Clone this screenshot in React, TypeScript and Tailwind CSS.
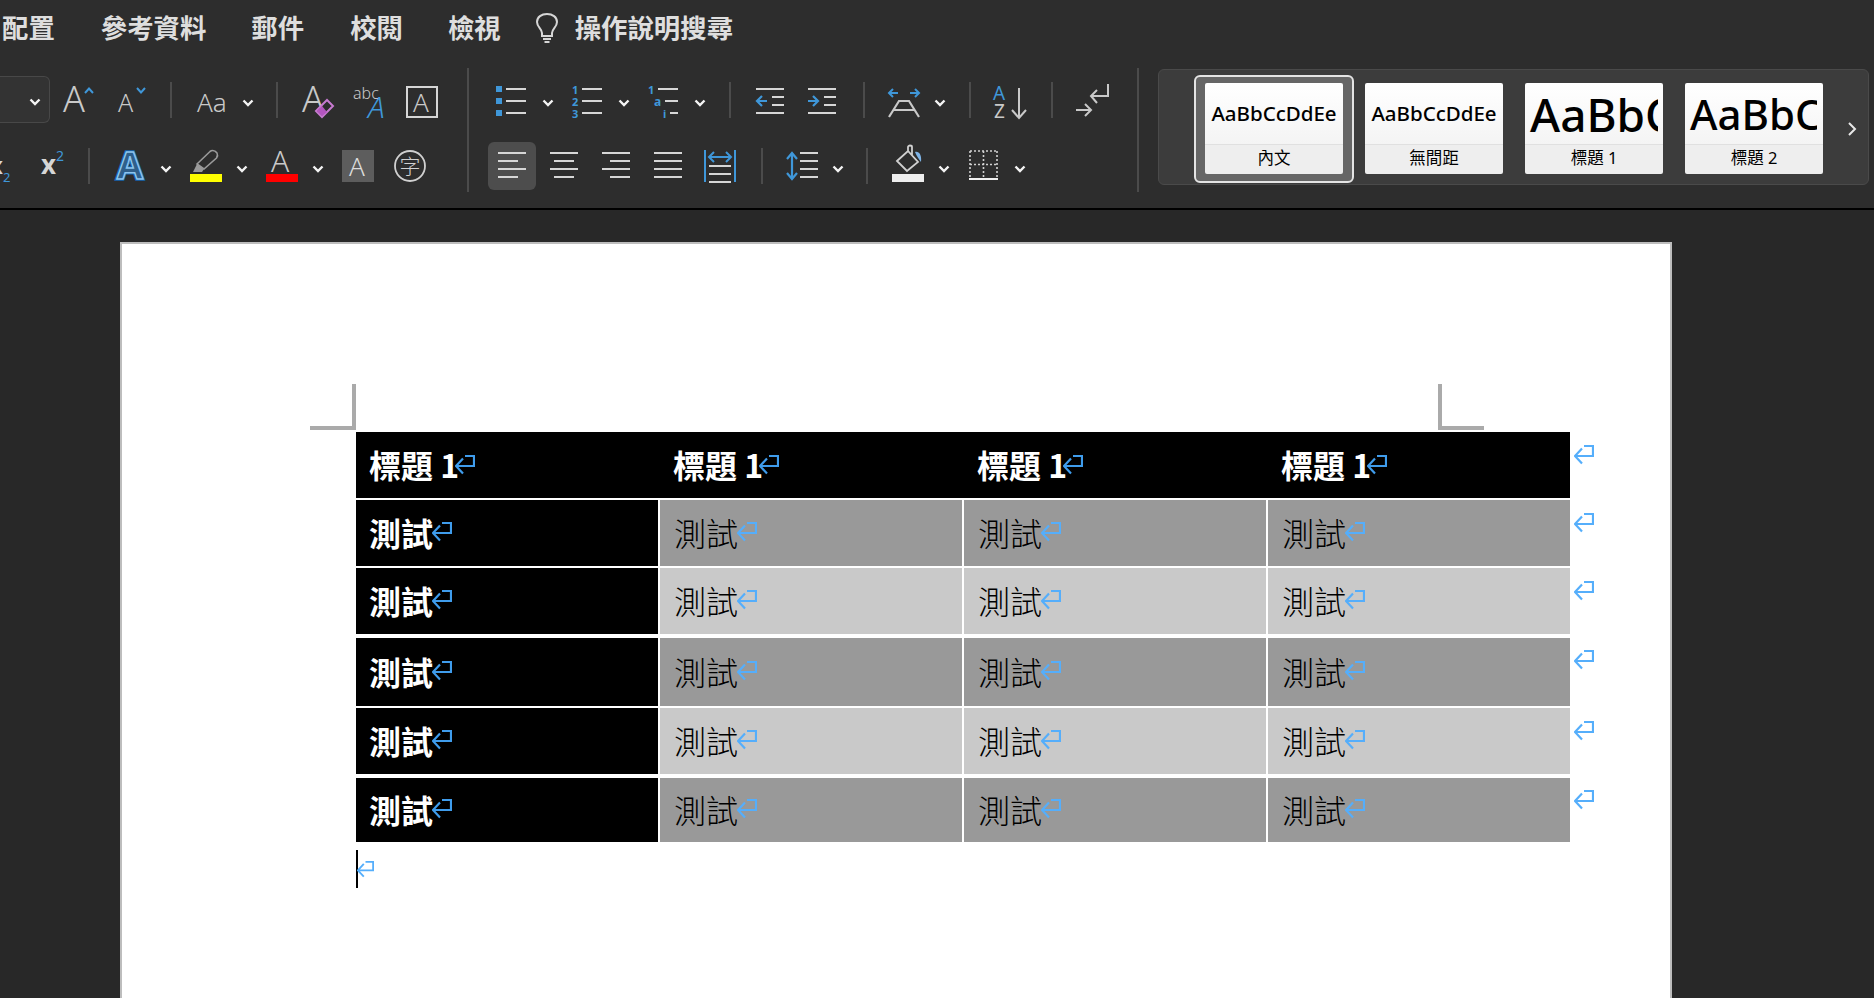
const GRAY = "#c9c9c9";
const BLUE = "#3f97d9";
const LABEL = "'Noto Sans', 'Noto Sans CJK TC', sans-serif";

// every ribbon icon is a 48px tall svg, so y values are offsets from the row top
const Icon = ({ w, className = "", children }: { w: number; className?: string; children: React.ReactNode }) => (
  <svg width={w} height={48} viewBox={`0 0 ${w} 48`} fill="none" className={`shrink-0 overflow-visible ${className}`}>
    {children}
  </svg>
);

const Chev = ({ className = "" }: { className?: string }) => (
  <Icon w={12} className={className}>
    <path d="M1.5 24.5 L6 29 L10.5 24.5" stroke="#f4f4f4" strokeWidth="2.4" />
  </Icon>
);

const Sep = ({ className = "" }: { className?: string }) => (
  <div className={`w-[2px] h-[36px] bg-[#4b4b4b] shrink-0 ${className}`} />
);

const Glyph = ({ x, y, size, fill = GRAY, weight = 300, italic, children }: { x: number; y: number; size: number; fill?: string; weight?: number; italic?: boolean; children: string }) => (
  <text x={x} y={y} fontSize={size} fill={fill} fontWeight={weight} fontStyle={italic ? "italic" : "normal"} fontFamily={LABEL}>
    {children}
  </text>
);

const Lines = ({ rows }: { rows: [number, number, number][] }) => (
  <>
    {rows.map(([x1, x2, y], i) => (
      <path key={i} d={`M${x1} ${y} H${x2}`} stroke="#d6d6d6" strokeWidth="2" />
    ))}
  </>
);

const Row = ({ children, className = "" }: { children: React.ReactNode; className?: string }) => (
  <div className={`flex items-center h-[48px] ${className}`}>{children}</div>
);

const FontGroup = () => (
  <div className="w-[467px] shrink-0 flex flex-col gap-[18px] pt-[8px] overflow-hidden">
    <Row>
      <div className="w-[50px] h-[47px] mt-[-2px] shrink-0 bg-[#333333] border border-l-0 border-[#484848] rounded-r-md flex items-center justify-end pr-[8px]">
        <Chev />
      </div>
      <Icon w={30} className="ml-[14px]">
        <Glyph x={-1} y={36} size={36}>A</Glyph>
        <path d="M21 17 L25 12.5 L29 17" stroke={BLUE} strokeWidth="2" />
      </Icon>
      <Icon w={27} className="ml-[25px]">
        <Glyph x={-1} y={36} size={25}>A</Glyph>
        <path d="M18 12 L22 16.5 L26 12" stroke={BLUE} strokeWidth="2" />
      </Icon>
      <Sep className="ml-[24px]" />
      <Icon w={32} className="ml-[25px]">
        <Glyph x={0} y={36} size={26}>Aa</Glyph>
      </Icon>
      <Chev className="ml-[13px]" />
      <Sep className="ml-[22px]" />
      <Icon w={32} className="ml-[24px]">
        <Glyph x={0} y={36} size={36}>A</Glyph>
        <path d="M14 35 L25 24 L31 30 L20 41 Z" stroke="#c77ad0" strokeWidth="2" />
        <path d="M15 35 L20 30 L25 36 L20 40 Z" fill="#b455c0" />
      </Icon>
      <Icon w={34} className="ml-[19px]">
        <Glyph x={0} y={23} size={16}>abc</Glyph>
        <Glyph x={15} y={42} size={30} fill={BLUE} weight={300} italic>A</Glyph>
      </Icon>
      <Icon w={32} className="ml-[19px]">
        <rect x="1" y="11" width="30" height="30" stroke="#d6d6d6" strokeWidth="2" />
        <Glyph x={7} y={36} size={26}>A</Glyph>
      </Icon>
    </Row>
    <Row>
      <Icon w={12}>
        <Glyph x={-11} y={32} size={24} weight={700} fill="#d6d6d6">x</Glyph>
        <Glyph x={3} y={40} size={13} fill={BLUE} weight={400}>2</Glyph>
      </Icon>
      <Icon w={22} className="ml-[29px]">
        <Glyph x={0} y={32} size={26} weight={700} fill="#d6d6d6">x</Glyph>
        <Glyph x={15} y={19} size={14} fill={BLUE} weight={400}>2</Glyph>
      </Icon>
      <Sep className="ml-[25px]" />
      <Icon w={32} className="ml-[24px]">
        <text x="16" y="37" textAnchor="middle" fontSize="38" fontWeight="700" fill="#1565ad" stroke="#1565ad" strokeWidth="3.5" fontFamily={LABEL}>A</text>
        <text x="16" y="37" textAnchor="middle" fontSize="38" fontWeight="700" fill="#2f5f8a" stroke="#8cc4ee" strokeWidth="1.5" fontFamily={LABEL}>A</text>
      </Icon>
      <Chev className="ml-[14px]" />
      <Icon w={32} className="ml-[18px]">
        <path d="M7 22 L20 9.5 C22 8 25 8.5 27 11 C28 13 28 14 26.5 16 L14 27 Z" stroke="#9a9a9a" strokeWidth="1.6" />
        <path d="M3 30 L7 22 L14 27 L12 30 Z" fill="#9a9a9a" />
        <rect x="0" y="32" width="32" height="8" fill="#ffff00" />
      </Icon>
      <Chev className="ml-[14px]" />
      <Icon w={32} className="ml-[18px]">
        <Glyph x={5} y={30} size={30}>A</Glyph>
        <rect x="0" y="32" width="32" height="8" fill="#ff0000" />
      </Icon>
      <Chev className="ml-[14px]" />
      <Icon w={32} className="ml-[18px]">
        <rect x="0" y="8" width="32" height="32" fill="#5d5d5d" />
        <Glyph x={7} y={34} size={26} fill="#dddddd">A</Glyph>
      </Icon>
      <Icon w={32} className="ml-[20px]">
        <circle cx="16" cy="24" r="15" stroke="#d0d0d0" strokeWidth="1.8" />
        <text x="16" y="32" textAnchor="middle" fontSize="21" fill="#d0d0d0" fontWeight="300" fontFamily="'Noto Sans CJK TC', sans-serif">字</text>
      </Icon>
    </Row>
  </div>
);

const ParaGroup = () => (
  <div className="w-[668px] shrink-0 flex flex-col gap-[18px] pt-[8px] pl-[19px]">
    <Row>
      <Icon w={30} className="ml-[8px]">
        <rect x="0" y="10" width="6" height="6" fill={BLUE} />
        <rect x="0" y="22" width="6" height="6" fill={BLUE} />
        <rect x="0" y="34" width="6" height="6" fill={BLUE} />
        <Lines rows={[[10, 30, 13], [10, 30, 25], [10, 30, 37]]} />
      </Icon>
      <Chev className="ml-[16px]" />
      <Icon w={30} className="ml-[18px]">
        <Glyph x={0} y={18} size={11} fill={BLUE} weight={700}>1</Glyph>
        <Glyph x={0} y={30} size={11} fill={BLUE} weight={700}>2</Glyph>
        <Glyph x={0} y={42} size={11} fill={BLUE} weight={700}>3</Glyph>
        <Lines rows={[[10, 30, 13], [10, 30, 25], [10, 30, 37]]} />
      </Icon>
      <Chev className="ml-[16px]" />
      <Icon w={30} className="ml-[18px]">
        <Glyph x={0} y={18} size={11} fill={BLUE} weight={700}>1</Glyph>
        <Glyph x={6} y={30} size={12} fill={BLUE} weight={700}>a</Glyph>
        <Glyph x={15} y={42} size={11} fill={BLUE} weight={700}>i</Glyph>
        <Lines rows={[[10, 30, 13], [17, 30, 25], [22, 30, 37]]} />
      </Icon>
      <Chev className="ml-[16px]" />
      <Sep className="ml-[23px]" />
      <Icon w={28} className="ml-[25px]">
        <Lines rows={[[0, 28, 13], [16, 28, 21], [16, 28, 29], [0, 28, 37]]} />
        <path d="M11 25 H1 M6 20 L1 25 L6 30" stroke={BLUE} strokeWidth="2.2" />
      </Icon>
      <Icon w={28} className="ml-[24px]">
        <Lines rows={[[0, 28, 13], [16, 28, 21], [16, 28, 29], [0, 28, 37]]} />
        <path d="M0 25 H10 M5 20 L10 25 L5 30" stroke={BLUE} strokeWidth="2.2" />
      </Icon>
      <Sep className="ml-[27px]" />
      <Icon w={32} className="ml-[23px]">
        <path d="M1 17 H10 M5 13 L1 17 L5 21 M22 17 H31 M27 13 L31 17 L27 21" stroke={BLUE} strokeWidth="2" />
        <path d="M1 41 L11 25 H21 L31 41 M6 34 H26" stroke="#c9c9c9" strokeWidth="2.2" />
      </Icon>
      <Chev className="ml-[14px]" />
      <Sep className="ml-[23px]" />
      <Icon w={34} className="ml-[22px]">
        <Glyph x={0} y={24} size={19} fill={BLUE} weight={400}>A</Glyph>
        <Glyph x={1} y={42} size={19} fill="#c9c9c9" weight={400}>Z</Glyph>
        <path d="M26 12 V41 M19 34 L26 42 L33 34" stroke="#c9c9c9" strokeWidth="2" />
      </Icon>
      <Sep className="ml-[24px]" />
      <Icon w={34} className="ml-[22px]">
        <path d="M33 8 V20 H16 M22 14 L16 20 L22 27" stroke="#c9c9c9" strokeWidth="2" />
        <path d="M1 34 H16 M10 28 L16 34 L10 40" stroke="#c9c9c9" strokeWidth="2" />
      </Icon>
    </Row>
    <Row>
      <div className="w-[48px] h-[48px] shrink-0 rounded-md bg-[#4d4d4d] flex items-center justify-center">
        <Icon w={28}>
          <Lines rows={[[0, 28, 11], [0, 20, 19], [0, 28, 27], [0, 20, 35]]} />
        </Icon>
      </div>
      <Icon w={28} className="ml-[14px]">
        <Lines rows={[[0, 28, 11], [4, 24, 19], [0, 28, 27], [4, 24, 35]]} />
      </Icon>
      <Icon w={28} className="ml-[24px]">
        <Lines rows={[[0, 28, 11], [8, 28, 19], [0, 28, 27], [8, 28, 35]]} />
      </Icon>
      <Icon w={28} className="ml-[24px]">
        <Lines rows={[[0, 28, 11], [0, 28, 19], [0, 28, 27], [0, 28, 35]]} />
      </Icon>
      <Icon w={32} className="ml-[22px]">
        <path d="M1 8 V40 M31 8 V40" stroke={BLUE} strokeWidth="2" />
        <path d="M5 15 H27 M10 10 L5 15 L10 20 M22 10 L27 15 L22 20" stroke={BLUE} strokeWidth="2" />
        <Lines rows={[[5, 27, 24], [5, 27, 32], [5, 27, 40]]} />
      </Icon>
      <Sep className="ml-[25px]" />
      <Icon w={32} className="ml-[23px]">
        <path d="M6 12 V36 M1 17 L6 11 L11 17 M1 31 L6 37 L11 31" stroke={BLUE} strokeWidth="2.2" />
        <Lines rows={[[14, 32, 11], [14, 32, 19], [14, 32, 27], [14, 32, 35]]} />
      </Icon>
      <Chev className="ml-[14px]" />
      <Sep className="ml-[22px]" />
      <Icon w={32} className="ml-[24px]">
        <path d="M5 19 L16 9 L26 20 L15 29 Z M16 9 V5 C16 3 20 3 20 5 V13" stroke="#d0d0d0" strokeWidth="1.8" />
        <path d="M23 10 C27 9 30 13 29 20 C27 17 25 15 23 10 Z" fill="#7fb4e6" />
        <rect x="0" y="32" width="32" height="8" fill="#eeeeee" />
      </Icon>
      <Chev className="ml-[14px]" />
      <Icon w={29} className="ml-[19px]">
        <path d="M1 9 V36 M14.5 9 V36 M28 9 V36 M1 9 H28 M1 22.5 H28" stroke="#d0d0d0" strokeWidth="1.6" strokeDasharray="2 2" />
        <rect x="0" y="36" width="29" height="2" fill="#f0f0f0" />
      </Icon>
      <Chev className="ml-[16px]" />
    </Row>
  </div>
);

const StyleCard = ({ label, className = "", children }: { label: string; className?: string; children: React.ReactNode }) => (
  <div className={`w-[138px] h-[91px] shrink-0 rounded-[2px] overflow-hidden flex flex-col text-black ${className}`}>
    <div className="h-[61px] bg-gradient-to-b from-white to-[#f4f4f4] flex items-center overflow-hidden">{children}</div>
    <div className="h-[30px] pb-[2px] bg-[#eeeeee] border-t border-[#e0e0e0] flex items-center justify-center text-[16.5px] leading-none font-['Noto_Sans','Noto_Sans_CJK_TC',sans-serif]">
      {label}
    </div>
  </div>
);

const Gallery = () => (
  <div className="w-[711px] h-[116px] mt-[1px] shrink-0 bg-[#3c3c3c] border border-[#4a4a4a] rounded-md flex items-center pl-[35px] pt-[3px] relative">
    <div className="w-[160px] h-[108px] shrink-0 border-2 border-[#e4e4e4] rounded-[6px] bg-[#666666] flex items-center justify-center">
      <StyleCard label="內文">
        <span className="w-full text-center text-[20.5px] font-medium font-['Noto_Sans',sans-serif]">AaBbCcDdEe</span>
      </StyleCard>
    </div>
    <StyleCard label="無間距" className="ml-[11px]">
      <span className="w-full text-center text-[20.5px] font-medium font-['Noto_Sans',sans-serif]">AaBbCcDdEe</span>
    </StyleCard>
    <StyleCard label="標題 1" className="ml-[22px]">
      <div className="w-[133px] pl-[5px] overflow-hidden whitespace-nowrap text-[46px] font-medium leading-none font-['Noto_Sans',sans-serif]">AaBbCcDdEe</div>
    </StyleCard>
    <StyleCard label="標題 2" className="ml-[22px]">
      <div className="w-[132px] pl-[5px] overflow-hidden whitespace-nowrap text-[42px] font-medium leading-none font-['Noto_Sans',sans-serif]">AaBbCcDdEe</div>
    </StyleCard>
    <svg width="12" height="20" viewBox="0 0 12 20" fill="none" className="ml-[23px] shrink-0">
      <path d="M3 4 L9 10 L3 16" stroke="#e8e8e8" strokeWidth="2" />
    </svg>
  </div>
);

const Ribbon = () => (
  <header className="h-[208px] bg-[#2d2d2d] flex flex-col">
    <nav className="h-[58px] pb-[3px] shrink-0 flex items-center pl-[2px] text-[#dedede] text-[26.4px] font-bold leading-none whitespace-nowrap font-['Noto_Sans_CJK_TC',sans-serif]">
      <span>配置</span>
      <span className="ml-[46px]">參考資料</span>
      <span className="ml-[45px]">郵件</span>
      <span className="ml-[46px]">校閱</span>
      <span className="ml-[45px]">檢視</span>
      <svg width="26" height="32" viewBox="0 0 26 32" fill="none" className="ml-[33px] shrink-0">
        <path d="M8 21 C8 17 3 15 3 10 C3 5 7.5 2 13 2 C18.5 2 23 5 23 10 C23 15 18 17 18 21 V24 H8 Z" stroke="#d6d6d6" strokeWidth="2" />
        <path d="M9 27 H17 M10.5 30 H15.5" stroke="#d6d6d6" strokeWidth="2" />
      </svg>
      <span className="ml-[15px]">操作說明搜尋</span>
    </nav>
    <div className="flex items-start pt-[10px]">
      <FontGroup />
      <div className="w-[2px] h-[124px] bg-[#4b4b4b] shrink-0" />
      <ParaGroup />
      <div className="w-[2px] h-[124px] bg-[#4b4b4b] shrink-0" />
      <div className="ml-[19px]">
        <Gallery />
      </div>
    </div>
  </header>
);

const ReturnMark = ({ color = "#3f9cec", className = "" }: { color?: string; className?: string }) => (
  <svg width="20" height="20" viewBox="0 0 20 20" fill="none" className={`shrink-0 ${className}`}>
    <path d="M10 1 H19 V11 H1 M8 3.5 L1 11 L8 18.5" stroke={color} strokeWidth="2.2" />
  </svg>
);

const HeadCell = () => (
  <div className="pl-[13px] flex items-center text-white text-[32px] font-bold leading-none">
    <span className="-mt-[3px]">標題 1</span>
    <ReturnMark className="-ml-[4px] -mt-[1px]" />
  </div>
);

const FirstCell = () => (
  <div className="bg-black pl-[13px] flex items-center text-white text-[32px] font-bold leading-none">
    <span className="-mt-[3px]">測試</span>
    <ReturnMark className="-ml-[1px] -mt-[2px]" />
  </div>
);

const BodyCell = ({ bg }: { bg: string }) => (
  <div className={`${bg} pl-[14px] flex items-center text-black text-[32px] font-light leading-none`}>
    <span className="-mt-[3px]">測試</span>
    <ReturnMark color="#55aefb" className="-ml-[1px] -mt-[2px]" />
  </div>
);

const rows = [
  { h: "h-[66px] mb-[2px]", bg: "bg-[#999999]" },
  { h: "h-[66px] mb-[4px]", bg: "bg-[#c9c9c9]" },
  { h: "h-[68px] mb-[2px]", bg: "bg-[#999999]" },
  { h: "h-[66px] mb-[4px]", bg: "bg-[#c9c9c9]" },
  { h: "h-[64px]", bg: "bg-[#999999]" },
];

const Page = () => (
  <main className="w-[1552px] ml-[120px] mt-[32px] h-[756px] bg-white border-2 border-b-0 border-[#bdbdbd] relative pl-[234px] pt-[188px] font-['Noto_Sans_CJK_TC',sans-serif]">
    {/* margin crop marks */}
    <div className="absolute left-[188px] top-[140px] w-[46px] h-[46px] border-r-4 border-b-4 border-[#aaaaaa]" />
    <div className="absolute left-[1316px] top-[140px] w-[46px] h-[46px] border-l-4 border-b-4 border-[#aaaaaa]" />
    <div className="w-[1240px] relative">
      <div className="h-[66px] mb-[2px] w-[1214px] grid grid-cols-[302px_302px_302px_302px] gap-x-[2px] bg-black">
        <HeadCell />
        <HeadCell />
        <HeadCell />
        <HeadCell />
      </div>
      {rows.map((r, i) => (
        <div key={i} className={`${r.h} w-[1214px] grid grid-cols-[302px_302px_302px_302px] gap-x-[2px]`}>
          <FirstCell />
          <BodyCell bg={r.bg} />
          <BodyCell bg={r.bg} />
          <BodyCell bg={r.bg} />
        </div>
      ))}
      {/* end of row marks sit just outside the table */}
      {[13, 81, 149, 218, 289, 358].map((t) => (
        <div key={t} className="absolute left-[1218px]" style={{ top: t }}>
          <ReturnMark color="#55aefb" />
        </div>
      ))}
    </div>
    <div className="mt-[8px] h-[38px] flex items-center">
      <div className="w-[2px] h-[38px] bg-black" />
      <ReturnMark color="#55aefb" className="w-[17px] h-[17px] -ml-[1px]" />
    </div>
  </main>
);

export default function App() {
  return (
    <div className="w-[1874px] h-[998px] overflow-hidden bg-[#282828]">
      <Ribbon />
      <div className="h-[2px] bg-black" />
      <Page />
    </div>
  );
}
